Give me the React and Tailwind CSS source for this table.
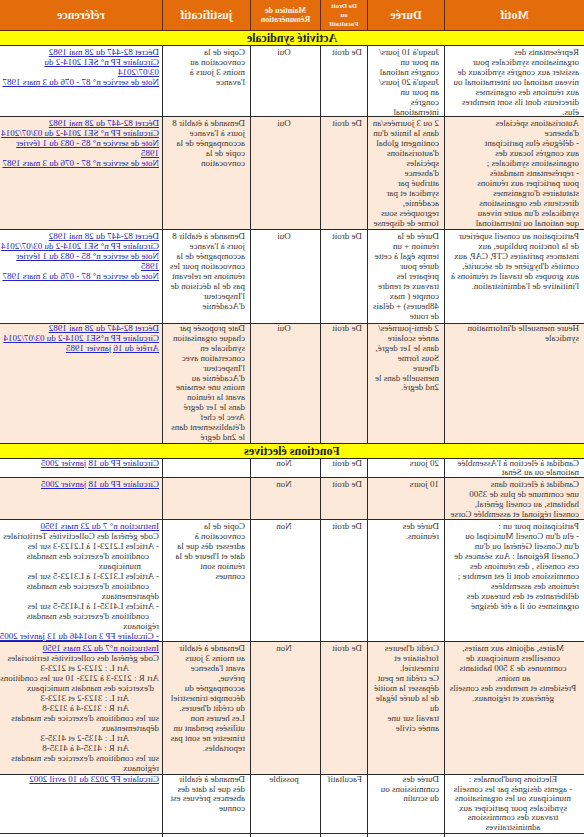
import React from "react";

const COLS = "grid grid-cols-[140px_77px_47px_70px_88px_162px]";
const PEACH = "bg-[#fde9d9]";
const CELL = "border-r border-b border-[#2a2a2a] overflow-hidden pl-[5px] pr-[2px]";
const LAST = "border-b border-[#2a2a2a] overflow-hidden pl-[3px]";
const IND = { i: "pl-[30px]", j: "pl-[10px]", k: "pl-[18px]", s: "pl-[5px]", n: "" };

function Lines({ lines, className = "" }) {
  return lines.map((l, i) => (
    <div key={i} className={`whitespace-nowrap ${className}`}>
      {l}
    </div>
  ));
}

function Ref({ items }) {
  return items.map(([t, k], i) =>
    k === "l" ? (
      <div key={i} className="whitespace-nowrap">
        <a className="text-[#2424c4] underline">{t}</a>
      </div>
    ) : (
      <div key={i} className={`whitespace-nowrap ${IND[k] || ""}`}>
        {t}
      </div>
    )
  );
}

const refA = [
  ["Décret 82-447 du 28 mai 1982", "l"],
  ["Circulaire FP n° SE1 2014-2 du 03/07/2014", "l"],
  ["Note de service n° 85 - 083 du 1 février", "l"],
  ["1985", "l"],
  ["Note de service n° 87 - 076 du 3 mars 1987", "l"],
];

const NORMAL = "pt-px leading-[10px]";

const rowsA = [
  {
    h: "h-[71px]",
    bg: "bg-white",
    lead: NORMAL,
    motif: [
      "Représentants des",
      "organisations syndicales pour",
      "assister aux congrès syndicaux de",
      "niveau national ou international ou",
      "aux réunions des organismes",
      "directeurs dont ils sont membres",
      "élus.",
    ],
    duree: [
      "Jusqu'à 10 jours/",
      "an pour un",
      "congrès national",
      "Jusqu'à 20 jours/",
      "an pour un",
      "congrès",
      "international",
    ],
    droit: "De droit",
    maintien: "Oui",
    justif: ["Copie de la", "convocation au", "moins 3 jours à", "l'avance"],
    ref: [
      ["Décret 82-447 du 28 mai 1982", "l"],
      ["Circulaire FP n° SE1 2014-2 du", "l"],
      ["03/07/2014", "l"],
      ["Note de service n° 87 - 076 du 3 mars 1987", "l"],
    ],
  },
  {
    h: "h-[113px]",
    bg: PEACH,
    lead: NORMAL,
    motif: [
      "Autorisations spéciales",
      "d'absence",
      "- délégués élus participant",
      "aux congrès locaux des",
      "organisations syndicales ;",
      "- représentants mandatés",
      "pour participer aux réunions",
      "statutaires d'organismes",
      "directeurs des organisations",
      "syndicales d'un autre niveau",
      "que national ou international",
    ],
    duree: [
      "2 ou 3 journées/an",
      "dans la limite d'un",
      "contingent global",
      "d'autorisations",
      "spéciales",
      "d'absence",
      "attribué par",
      "syndicat et par",
      "académie,",
      "regroupées sous",
      "forme de dispense",
    ],
    droit: "De droit",
    maintien: "Oui",
    justif: [
      "Demande à établir 8",
      "jours à l'avance",
      "accompagnée de la",
      "copie de la",
      "convocation",
    ],
    ref: refA,
  },
  {
    h: "h-[94px]",
    bg: "bg-white",
    lead: NORMAL,
    motif: [
      "Participation au conseil supérieur",
      "de la fonction publique, aux",
      "instances paritaires CTP, CAP, aux",
      "comités d'hygiène et de sécurité,",
      "aux groupes de travail et réunions à",
      "l'initiative de l'administration.",
    ],
    duree: [
      "Durée de la",
      "réunion + un",
      "temps égal à cette",
      "durée pour",
      "préparer les",
      "travaux et rendre",
      "compte ( max",
      "48heures) + délais",
      "de route",
    ],
    droit: "De droit",
    maintien: "Oui",
    justif: [
      "Demande à établir 8",
      "jours à l'avance",
      "accompagnée de la",
      "convocation pour les",
      "réunions ne relevant",
      "pas de la décision de",
      "l'Inspecteur",
      "d'Académie",
    ],
    ref: refA,
  },
  {
    h: "h-[120px]",
    bg: PEACH,
    lead: "pt-0 leading-[9.9px]",
    motif: ["Heure mensuelle d'information", "syndicale"],
    duree: [
      "2 demi-journées/",
      "année scolaire",
      "dans le 1er degré,",
      "Sous forme",
      "d'heure",
      "mensuelle dans le",
      "2nd degré.",
    ],
    droit: "De droit",
    maintien: "Oui",
    justif: [
      "Date proposée par",
      "chaque organisation",
      "syndicale en",
      "concertation avec",
      "l'Inspecteur",
      "d'Académie au",
      "moins une semaine",
      "avant la réunion",
      "dans le 1er degré",
      "Avec le chef",
      "d'établissement dans",
      "le 2nd degré",
    ],
    ref: [
      ["Décret 82-447 du 28 mai 1982", "l"],
      ["Circulaire FP n°SE1 2014-2 du 03/07/2014", "l"],
      ["Arrêté du 16 janvier 1985", "l"],
    ],
  },
];

const rowsB = [
  {
    h: "h-[19px]",
    bg: "bg-white",
    lead: "pt-0 leading-[9px]",
    motif: ["Candidat à élection à l'Assemblée", "nationale ou au Sénat"],
    duree: ["20 jours"],
    droit: "De droit",
    maintien: "Non",
    justif: [],
    ref: [["Circulaire FP du 18 janvier 2005", "l"]],
  },
  {
    h: "h-[42px]",
    bg: PEACH,
    lead: NORMAL,
    motif: [
      "Candidat à élection dans",
      "une commune de plus de 3500",
      "habitants, au conseil général,",
      "conseil régional et assemblée Corse",
    ],
    duree: ["10 jours"],
    droit: "De droit",
    maintien: "Non",
    justif: [],
    ref: [["Circulaire FP du 18 janvier 2005", "l"]],
  },
  {
    h: "h-[122px]",
    bg: "bg-white",
    lead: NORMAL,
    motif: [
      "Participation pour un :",
      "- élu d'un Conseil Municipal ou",
      "d'un Conseil Général ou d'un",
      "Conseil Régional : Aux séances de",
      "ces conseils , des réunions des",
      "commissions dont il est membre ;",
      "réunions des assemblées",
      "délibérantes et des bureaux des",
      "organismes où il a été désigné",
    ],
    duree: ["Durée des", "réunions."],
    droit: "De droit",
    maintien: "Non",
    justif: [
      "Copie de la",
      "convocation à",
      "adresser dès que la",
      "date et l'heure de la",
      "réunion sont",
      "connues",
    ],
    ref: [
      ["Instruction n° 7 du 23 mars 1950", "l"],
      ["Code général des Collectivités Territoriales", "n"],
      ["- Articles L2123-1 à L2123-3 sur les", "n"],
      ["conditions d'exercice des mandats", "j"],
      ["municipaux", "k"],
      ["- Articles L3123-1 à L3123-5 sur les", "n"],
      ["conditions d'exercice des mandats", "j"],
      ["départementaux", "n"],
      ["- Articles L4135-1 à L4135-5 sur les", "n"],
      ["conditions d'exercice des mandats", "j"],
      ["régionaux", "n"],
      ["- Circulaire FP 3 no1446 du 13 janvier 2005", "l"],
    ],
  },
  {
    h: "h-[133px]",
    bg: PEACH,
    lead: NORMAL,
    center: true,
    motif: [
      "Maires, adjoints aux maires,",
      "conseillers municipaux de",
      "communes de 3 500 habitants",
      "au moins.",
      "Présidents et membres des conseils",
      "généraux et régionaux.",
    ],
    duree: [
      "Crédit d'heures",
      "forfaitaire et",
      "trimestriel.",
      "Ce crédit ne peut",
      "dépasser la moitié",
      "de la durée légale",
      "du",
      "travail sur une",
      "année civile",
    ],
    droit: "De droit",
    maintien: "Non",
    justif: [
      "Demande à établir",
      "au moins 3 jours",
      "avant l'absence",
      "prévue,",
      "accompagnée du",
      "décompte trimestriel",
      "du crédit d'heures.",
      "Les heures non",
      "utilisées pendant un",
      "trimestre ne sont pas",
      "reportables.",
    ],
    ref: [
      ["Instruction n°7 du 23 mars 1950", "l"],
      ["Code général des collectivités territoriales", "n"],
      ["Art L : 2123-2 et 2123-3", "i"],
      [" Art R : 2123-3 à 2123- 10 sur les conditions", "n"],
      ["d'exercice des mandats municipaux", "s"],
      ["Art L : 3123-2 et 3123-3", "i"],
      ["Art R : 3123-4 à 3123-8", "i"],
      ["sur les conditions d'exercice des mandats", "n"],
      ["départementaux", "n"],
      ["Art L : 4135-2 et 4135-3", "i"],
      ["Art R : 4135-4 à 4135-8", "i"],
      ["sur les conditions d'exercice des mandats", "n"],
      ["régionaux", "n"],
    ],
  },
  {
    h: "h-[59px]",
    bg: "bg-white",
    lead: "pt-0 leading-[9.6px]",
    center: true,
    motif: [
      "Elections prud'homales :",
      "- agents désignés par les conseils",
      "municipaux ou les organisations",
      "syndicales pour participer aux",
      "travaux des commissions",
      "administratives",
    ],
    duree: ["Durée des", "commissions ou", "du scrutin"],
    droit: "Facultatif",
    maintien: "possible",
    justif: [
      "Demande à établir",
      "dès que la date des",
      "absences prévues est",
      "connue",
    ],
    ref: [["Circulaire FP 2023 du 10 avril 2002", "l"]],
  },
];

function Row({ r }) {
  return (
    <div className={`${COLS} ${r.h} ${r.bg}`}>
      <div className={`${CELL} ${r.lead} ${r.center ? "text-center" : ""}`}>
        <Lines lines={r.motif} />
      </div>
      <div className={`${CELL} ${r.lead}`}>
        <Lines lines={r.duree} />
      </div>
      <div className={`${CELL} ${r.lead}`}>
        <Lines lines={[r.droit]} />
      </div>
      <div className={`${CELL} ${r.lead} text-center`}>
        <Lines lines={[r.maintien]} />
      </div>
      <div className={`${CELL} ${r.lead}`}>
        <Lines lines={r.justif} />
      </div>
      <div className={`${LAST} ${r.lead}`}>
        <Ref items={r.ref} />
      </div>
    </div>
  );
}

function Section({ title }) {
  return (
    <div className="h-[15px] bg-[#ffff00] border-b border-[#2a2a2a] flex items-center justify-center text-[12px] leading-[14px] font-bold text-[#1a1a1a]">
      {title}
    </div>
  );
}

const HCELL =
  "border-r border-b border-[#5a2a05] flex flex-col items-center justify-center text-center font-bold text-[#fff4ea]";

export default function App() {
  return (
    <div className="w-[584px] h-[837px] overflow-hidden bg-white">
      <div className="[transform:scaleX(-1)] w-[584px] font-['Liberation_Serif','Times_New_Roman',serif] text-[9px] leading-[10px] text-[#383838]">
        <div className={`${COLS} h-[31px] bg-[#e46c0a]`}>
          <div className={`${HCELL} text-[12px]`}>Motif</div>
          <div className={`${HCELL} text-[12px]`}>Durée</div>
          <div className={`${HCELL} text-[7px] leading-[9px]`}>
            <div>De Droit</div>
            <div>ou</div>
            <div>Facultatif</div>
          </div>
          <div className={`${HCELL} text-[8px] leading-[9px]`}>
            <div>Maintien de</div>
            <div>Rémunération</div>
          </div>
          <div className={`${HCELL} text-[12px]`}>justificatif</div>
          <div className="border-b border-[#5a2a05] flex items-center justify-center font-bold text-[12px] text-[#fff4ea]">
            référence
          </div>
        </div>
        <Section title="Activité syndicale" />
        {rowsA.map((r, i) => (
          <Row key={i} r={r} />
        ))}
        <Section title="Fonctions électives" />
        {rowsB.map((r, i) => (
          <Row key={i} r={r} />
        ))}
        <div className={`${COLS} h-[30px] bg-white`}>
          <div className={CELL}></div>
          <div className={CELL}></div>
          <div className={CELL}></div>
          <div className={CELL}></div>
          <div className={CELL}></div>
          <div className={LAST}></div>
        </div>
      </div>
    </div>
  );
}
